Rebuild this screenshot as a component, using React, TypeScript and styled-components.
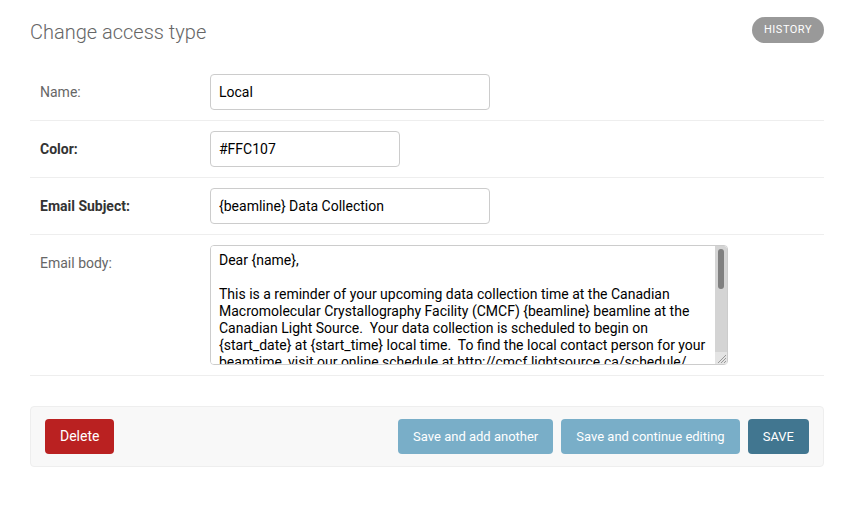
import React from 'react';
import styled, { createGlobalStyle } from 'styled-components';

const GlobalStyle = createGlobalStyle`
  html, body {
    margin: 0;
    padding: 0;
    background: #fff;
  }
  body {
    font-family: Roboto, 'Liberation Sans', sans-serif;
    color: #333;
  }
`;

const EMAIL_BODY = `Dear {name},

This is a reminder of your upcoming data collection time at the Canadian Macromolecular Crystallography Facility (CMCF) {beamline} beamline at the Canadian Light Source.  Your data collection is scheduled to begin on {start_date} at {start_time} local time.  To find the local contact person for your beamtime, visit our online schedule at http://cmcf.lightsource.ca/schedule/.

Please remember to submit your shipment and sample information through the MxLIVE system before the start of your beamtime, and make sure all of your samples are labelled correctly.

If you have any questions, please contact your local contact or the beamline staff.

Regards,
CMCF Staff`;

interface Field {
  label: string;
  value: string;
  required?: boolean;
  width: number;
}

const fields: Field[] = [
  { label: 'Name:', value: 'Local', width: 280 },
  { label: 'Color:', value: '#FFC107', required: true, width: 190 },
  { label: 'Email Subject:', value: '{beamline} Data Collection', required: true, width: 280 },
];

export default function App() {
  return (
    <>
      <GlobalStyle />
      <Content>
        <Header>
          <Title>Change access type</Title>
          <HistoryLink href="#">History</HistoryLink>
        </Header>
        <Form onSubmit={e => e.preventDefault()}>
          <Fieldset>
            {fields.map(f => (
              <Row key={f.label}>
                <Label required={f.required}>{f.label}</Label>
                <TextInput type="text" defaultValue={f.value} style={{ width: f.width }} />
              </Row>
            ))}
            <Row>
              <Label>Email body:</Label>
              <TextAreaWrap>
                <TextArea defaultValue={EMAIL_BODY} />
                {/* drawn scrollbar, the screenshot browser hides native ones */}
                <ScrollTrack aria-hidden>
                  <ScrollThumb />
                  <Grip width="12" height="12" viewBox="0 0 12 12">
                    <path d="M11 3 L3 11 M11 6 L6 11 M11 9 L9 11" stroke="#999" strokeWidth="1" />
                  </Grip>
                </ScrollTrack>
              </TextAreaWrap>
            </Row>
          </Fieldset>
          <SubmitRow>
            <DeleteLink href="#">Delete</DeleteLink>
            <Actions>
              <Button type="button">Save and add another</Button>
              <Button type="button">Save and continue editing</Button>
              <Button type="submit" primary>
                SAVE
              </Button>
            </Actions>
          </SubmitRow>
        </Form>
      </Content>
    </>
  );
}

const Content = styled.div`
  padding: 17px 30px 40px;
`;

const Header = styled.div`
  display: flex;
  justify-content: space-between;
  align-items: flex-start;
`;

const Title = styled.h1`
  margin: 3px 0 20px;
  font-size: 20px;
  font-weight: 300;
  line-height: 24px;
  color: #666;
`;

const HistoryLink = styled.a`
  display: block;
  padding: 3px 12px;
  line-height: 20px;
  font-size: 11px;
  font-weight: 400;
  letter-spacing: 0.5px;
  text-transform: uppercase;
  text-decoration: none;
  color: #fff;
  background: #999;
  border-radius: 15px;
`;

const Form = styled.form`
  margin: 0;
`;

const Fieldset = styled.fieldset`
  margin: 0;
  padding: 0;
  border: none;
`;

const Row = styled.div`
  display: flex;
  align-items: flex-start;
  padding: 10px;
  border-bottom: 1px solid #eee;
`;

const Label = styled.label<{ required?: boolean }>`
  flex: 0 0 160px;
  padding: 8px 10px 0 0;
  line-height: 20px;
  font-size: 14px;
  font-weight: ${p => (p.required ? 700 : 400)};
  color: ${p => (p.required ? '#333' : '#666')};
`;

const TextInput = styled.input`
  box-sizing: border-box;
  height: 36px;
  padding: 8px 8px;
  font-family: Roboto, 'Liberation Sans', sans-serif;
  font-size: 14px;
  line-height: 18px;
  color: #000;
  border: 1px solid #ccc;
  border-radius: 4px;
  outline: none;
`;

const TextAreaWrap = styled.div`
  position: relative;
  display: flex;
`;

const TextArea = styled.textarea`
  box-sizing: border-box;
  width: 518px;
  height: 120px;
  padding: 6px 20px 6px 8px;
  font-family: Roboto, 'Liberation Sans', sans-serif;
  font-size: 14px;
  line-height: 17px;
  color: #000;
  border: 1px solid #ccc;
  border-radius: 4px;
  outline: none;
  resize: none;
  scrollbar-width: none;
`;

const ScrollTrack = styled.div`
  position: absolute;
  top: 1px;
  right: 1px;
  bottom: 1px;
  width: 12px;
  background: #d4d4d4;
  border-radius: 0 3px 3px 0;
  pointer-events: none;
`;

const ScrollThumb = styled.div`
  position: absolute;
  top: 3px;
  left: 3px;
  width: 6px;
  height: 40px;
  background: #808080;
  border-radius: 3px;
`;

const Grip = styled.svg`
  position: absolute;
  right: 0;
  bottom: 0;
  display: block;
  background: #e4e4e4;
`;

const SubmitRow = styled.div`
  display: flex;
  justify-content: space-between;
  align-items: center;
  margin-top: 30px;
  padding: 12px 14px;
  background: #f8f8f8;
  border: 1px solid #eee;
  border-radius: 4px;
`;

const DeleteLink = styled.a`
  display: block;
  padding: 10px 15px;
  line-height: 15px;
  font-size: 14px;
  color: #fff;
  text-decoration: none;
  background: #ba2121;
  border-radius: 4px;
`;

const Actions = styled.div`
  display: flex;
  gap: 8px;
`;

const Button = styled.button<{ primary?: boolean }>`
  padding: 10px 15px;
  line-height: 15px;
  font-family: Roboto, 'Liberation Sans', sans-serif;
  font-size: 13px;
  color: #fff;
  background: ${p => (p.primary ? '#417690' : '#79aec8')};
  border: none;
  border-radius: 4px;
  cursor: pointer;
`;
